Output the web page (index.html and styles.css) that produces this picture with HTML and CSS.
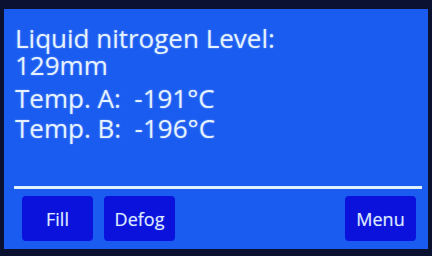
FILE: index.html
```html
<!DOCTYPE html>
<html lang="en">
<head>
    <meta charset="UTF-8">
    <title>LN2 Controller</title>
    <link rel="stylesheet" href="styles.css">
</head>
<body>
    <!-- Display panel -->
    <div class="screen">
        <div class="readout">
            <p class="level">Liquid nitrogen Level:<br>129mm</p>
            <p class="temp">Temp. A:&nbsp; -191°C</p>
            <p class="temp">Temp. B:&nbsp; -196°C</p>
        </div>

        <hr class="divider">

        <!-- Soft keys -->
        <div class="keys">
            <button class="key">Fill</button>
            <button class="key">Defog</button>
            <span class="spacer"></span>
            <button class="key">Menu</button>
        </div>
    </div>
</body>
</html>
```

FILE: styles.css
```css
/* General */
body {
    margin: 0;
    padding: 0;
    background: #0b1130;
    font-family: 'Open Sans', 'Liberation Sans', sans-serif;
    color: #e6f2ff;
    width: 432px;
    height: 256px;
    overflow: hidden;
}

/* Screen area */
.screen {
    margin: 9px 4px 0 4px;
    height: 240px;
    background: #1b5cf0;
    box-sizing: border-box;
    padding: 16px 0 0 11px;
    display: flex;
    flex-direction: column;
}

.readout p {
    margin: 0;
    font-size: 26px;
    line-height: 27px;
    text-shadow: 0 0 2px rgba(200, 230, 255, 0.5);
}

.readout .level {
    margin-bottom: 4px;
}

.readout .temp {
    line-height: 30px;
}

/* Divider */
.divider {
    margin: 43px 6px 0 -1px;
    border: none;
    height: 3px;
    background: #dff0ff;
}

/* Buttons */
.keys {
    display: flex;
    gap: 11px;
    margin: 7px 12px 0 7px;
}

.keys .spacer {
    flex: 1;
}

.key {
    width: 71px;
    height: 45px;
    border: none;
    border-radius: 4px;
    background: #0a12dc;
    color: #dde9ff;
    font-family: 'Open Sans', 'Liberation Sans', sans-serif;
    font-size: 18px;
    padding: 0;
    text-shadow: 0 0 1px rgba(200, 230, 255, 0.5);
}
```
